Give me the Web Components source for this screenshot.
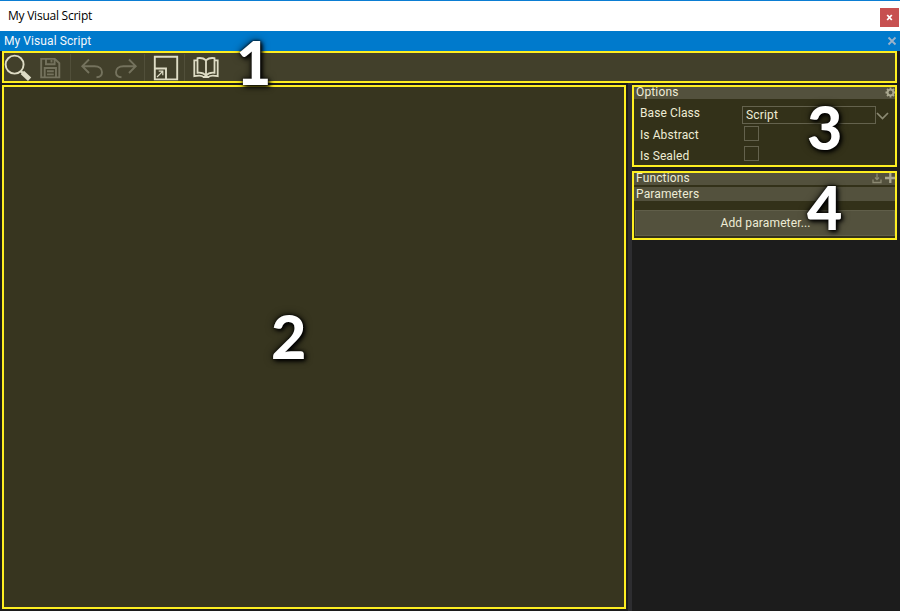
<!DOCTYPE html>
<html lang="en"><head><meta charset="utf-8"><title>My Visual Script</title>
<style>html,body{margin:0;width:900px;height:611px;overflow:hidden;background:#1c1c1c}</style></head><body>
<script-window></script-window>
<script>
const define=(name,html)=>customElements.define(name,class extends HTMLElement{
  constructor(){super();const t=document.createElement('template');t.innerHTML=html;
    this.attachShadow({mode:'open'}).append(t.content.cloneNode(true));}
});
define('title-bar',`<style>
:host{display:flex;height:31px;box-sizing:border-box;border-top:1px solid #0b7dd3;background:#fff;color:#000;padding:0 1px 0 8px;justify-content:space-between;font:12px/29px "Open Sans",sans-serif}
.t{letter-spacing:-.24px;height:30px}
.x{width:19px;height:19px;margin-top:7px;background:#c75050}
svg{display:block}
</style><span class="t"><slot></slot></span><span class="x"><svg width="19" height="19" viewBox="0 0 19 19"><path d="M7.2 7 11.8 12M11.8 7 7.2 12" stroke="#fff" stroke-width="1.8"/></svg></span>`);
define('tab-bar',`<style>
:host{display:flex;height:20px;background:#007acc;color:#f4f8fb;padding:0 3px 0 4px;justify-content:space-between;font:12px/20px Roboto,sans-serif}
.t{letter-spacing:.08px}svg{display:block;margin-top:5px}
</style><span class="t"><slot></slot></span><svg width="10" height="10" viewBox="0 0 10 10"><path d="M1.5 1.5 8.5 8.5M8.5 1.5 1.5 8.5" stroke="#9bb3ca" stroke-width="1.8"/></svg>`);
define('tool-bar',`<style>
:host{display:flex;height:32px;width:895px;box-sizing:border-box;border:2px solid #fdee21;background:#42402b;margin-left:2px}
svg{display:block;fill:none}.d{stroke:#74725d}.l{stroke:#dedcc5}
</style><svg width="240" height="28" viewBox="4 53 240 28">
<g class="l"><circle cx="14.6" cy="64.6" r="9" stroke-width="1.9"/><path d="M20.8 71.2 22.8 73" stroke-width="2.4"/><path d="M22.4 72.6 29.6 79.2" stroke-width="4.8"/></g>
<g class="d" stroke-width="1.9"><path d="M41.2 58.9H54.8L59.3 63.2V77.4H41.2ZM46 58.7V64.3H54.6V58.7M51.5 60V62.5M44.7 77.5V68H56V77.5M47 71.3H53.8M47 74.4H53.8"/></g>
<g class="d" stroke-width="1.9"><path d="M89 59.5 82.3 66.2 89 73M82.5 66.2H94.5C99.5 66.2 102 69 102 72.2S99.5 77 96.5 77.2M129 59.5 135.7 66.2 129 73M135.5 66.2H123.5C118.5 66.2 116 69 116 72.2S118.5 77 121.5 77.2"/></g>
<path d="M70.5 54V81M144.5 54V81M184.5 54V81" stroke="#514f3a"/>
<g class="l"><path d="M154.8 56.8H177.2V79.4H154.8ZM154.8 68.5H166V79.2" stroke-width="1.9"/><path d="M157 77 162.7 71.3M158.7 71.2H162.8V75.3" stroke-width="1.2"/></g>
<g class="l" stroke-width="1.8"><path d="M206 60.2C203.5 58 200 57.8 197.5 58.2V72.8C201 72.4 204 73.2 206 75.8C208 73.2 211 72.4 214.5 72.8V58.2C212 57.8 208.5 58 206 60.2V76"/><path d="M197.5 60.4H194.3V76.2C199 75.4 202 75.4 203.5 77H208.5C210 75.4 213 75.4 217.7 76.2V60.4H214.5"/></g></svg>`);
define('graph-canvas',`<style>
:host{display:block;box-sizing:border-box;width:624px;height:524px;margin-left:2px;border:2px solid #fdee21;background:#37351f}
</style>`);
define('group-header',`<style>
:host{display:flex;justify-content:space-between;background:#53513d;color:#eeecd5;font:12px/13px Roboto,sans-serif;padding-left:2px;box-sizing:border-box;letter-spacing:.14px}
.t{margin-top:var(--shift,0px)}
</style><span class="t"><slot></slot></span><slot name="icons"></slot>`);
define('property-row',`<style>
:host{display:flex;height:20.7px;color:#eeecd5;font:12px/21px Roboto,sans-serif}
.l{width:108px;padding-left:6px;box-sizing:border-box;letter-spacing:.09px;margin-top:var(--label-shift,0px)}
</style><span class="l"><slot name="label"></slot></span><slot></slot>`);
define('select-box',`<style>
:host{display:flex}.b{width:134px;height:18px;border:1px solid #64624d;box-sizing:border-box;padding-left:3px;line-height:17px;margin:3px 0 0 0;letter-spacing:.15px}
svg{display:block;margin:8px 0 0 0;fill:none}
</style><span class="b"><slot></slot></span><svg width="13" height="10"><path d="M1 2 6.5 7.5 12 2" stroke="#8c8a73" stroke-width="1.7"/></svg>`);
define('check-box',`<style>
:host{display:block;width:15px;height:15px;margin:2px 0 0 2px;box-sizing:border-box;border:1px solid #64624d}
</style>`);
define('options-panel',`<style>
:host{display:block;box-sizing:border-box;height:82px;border:2px solid #fdee21;background:#333119}
group-header{height:12px;--shift:-1px}.rows{padding-top:4px}svg{display:block}.low{--label-shift:1px}.lower{--label-shift:1.6px}
</style><group-header>Options<svg slot="icons" width="11" height="12" viewBox="0 0 11 12"><g fill="none" stroke="#aaa890"><circle cx="6.5" cy="5.5" r="2.9" stroke-width="1.9"/><path d="M6.5 .5V2.5M6.5 8.5V10.5M1.5 5.5H3.5M9.5 5.5H11.5M3 2 4.4 3.4M8.6 7.6 10 9M10 2 8.6 3.4M4.4 7.6 3 9" stroke-width="1.8"/></g></svg></group-header>
<div class="rows"><property-row><span slot="label">Base Class</span><select-box>Script</select-box></property-row>
<property-row class="low"><span slot="label">Is Abstract</span><check-box></check-box></property-row>
<property-row class="lower"><span slot="label">Is Sealed</span><check-box></check-box></property-row></div>`);
define('members-panel',`<style>
:host{display:block;box-sizing:border-box;height:69px;border:2px solid #fdee21;background:#333119;margin-top:4px}
.f{height:12px;--shift:-1px}.p{height:14px;margin-top:2px;--shift:1px}
.b{height:26px;margin:9px 0 0 1px;background:#53513d;box-sizing:border-box;border:1px solid #605e49;color:#eeecd5;text-align:center;font:12px/25px Roboto,sans-serif;letter-spacing:.13px;padding-left:1px}
svg{display:block}
</style><group-header class="f">Functions<svg slot="icons" width="24" height="12" viewBox="0 0 24 12"><path d="M2 6.5V9.5H10V6.5M6 .5V6.5M4 4.5 6 6.5 8 4.5" fill="none" stroke="#8b8972" stroke-width="1.3"/><path d="M19.3 0V10M14 5H24" stroke="#aaa890" stroke-width="2.3"/></svg></group-header>
<group-header class="p">Parameters</group-header><div class="b">Add parameter...</div>`);
define('number-callout',`<style>
:host{position:absolute;font:900 61px/61px Lato,sans-serif;color:#fff;text-shadow:2px 2px 4px #000,0 0 3px #000,0 0 9px rgba(0,0,0,.75)}
</style><slot></slot>`);
define('script-window',`<style>
:host{display:block;position:relative;width:900px;height:611px;background:#1c1c1c}
.strip{background:#1c1c1f}.main{display:flex;padding-top:2px}
.split{width:4px;margin-left:2px;height:528px;margin-top:-2px;background:#2d2d30}.side{width:265px}
</style><title-bar>My Visual Script</title-bar><tab-bar>My Visual Script</tab-bar><div class="strip"><tool-bar></tool-bar></div>
<div class="main"><graph-canvas></graph-canvas><div class="split"></div><div class="side"><options-panel></options-panel><members-panel></members-panel></div></div>
<number-callout style="left:236px;top:31px">1</number-callout><number-callout style="left:271px;top:305px">2</number-callout><number-callout style="left:807px;top:96px">3</number-callout><number-callout style="left:807px;top:176px">4</number-callout>`);
</script></body></html>
